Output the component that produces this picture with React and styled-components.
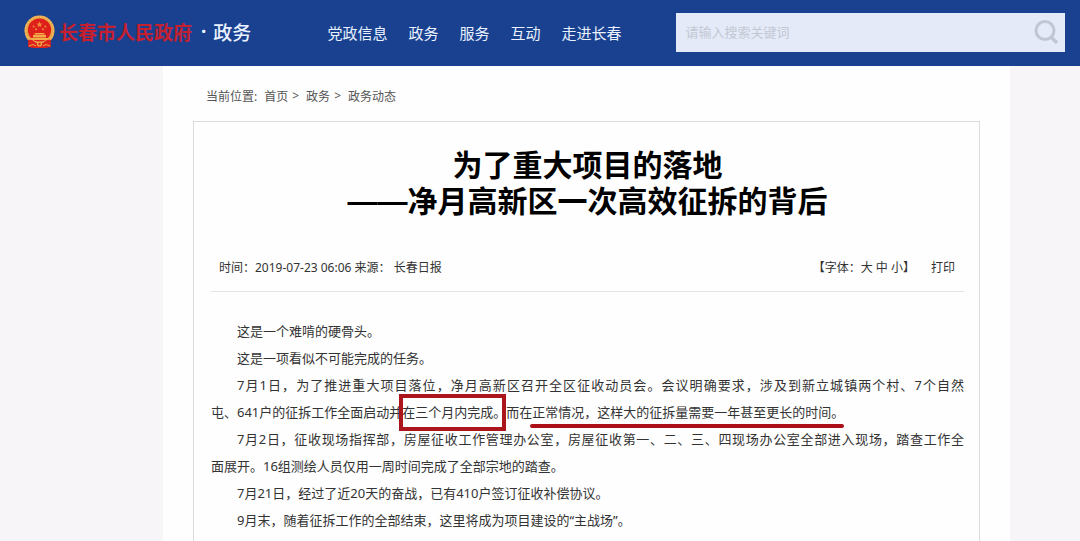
import React, { useState } from 'react'
import styled, { createGlobalStyle } from 'styled-components'

const navLinks = ['党政信息', '政务', '服务', '互动', '走进长春']

function Emblem() {
  return (
    <svg width="31" height="34" viewBox="0 0 31 34" aria-hidden="true">
      <path d="M5 23 L4 32 L10 33 L21 33 L27 32 L26 23 Z" fill="#d8231f" />
      <circle cx="15.5" cy="15.5" r="15" fill="#e9a545" />
      <circle cx="15.5" cy="15.5" r="14" fill="none" stroke="#f0bc68" strokeWidth="1.4" strokeDasharray="2 1" />
      <circle cx="15.5" cy="15" r="11.6" fill="#df1f1c" />
      <path d="M15.5 6.5l.8 2.1 2.3.1-1.8 1.4.6 2.2-1.9-1.2-1.9 1.2.6-2.2-1.8-1.4 2.3-.1z" fill="#f08b3a" />
      <circle cx="9.6" cy="11.6" r="1" fill="#f08b3a" />
      <circle cx="12" cy="14.2" r="1" fill="#f08b3a" />
      <circle cx="19" cy="14.2" r="1" fill="#f08b3a" />
      <circle cx="21.4" cy="11.6" r="1" fill="#f08b3a" />
      <path d="M11 18h9l1 1.5h-11zM9 20h13v2.5h-13zM6.5 23h18v2h-18z" fill="#f2ad48" />
      <path d="M4 25c4-1 6 1 8 3h7c2-2 4-4 8-3l-1 7c-3 0-4 0-6 1h-9c-2-1-3-1-6-1z" fill="#dd231e" />
      <circle cx="15.5" cy="29" r="2.6" fill="#f0a944" />
      <circle cx="15.5" cy="29" r="1.2" fill="#d8231f" />
      <path d="M5 31l4-1.5 3 1.5M26 31l-4-1.5-3 1.5" fill="none" stroke="#eea544" strokeWidth="1" />
    </svg>
  )
}

function SearchBox() {
  const [word, setWord] = useState('')

  return (
    <SearchForm role="search" onSubmit={(e) => e.preventDefault()}>
      <SearchInput
        type="text"
        aria-label="搜索"
        placeholder="请输入搜索关键词"
        value={word}
        onChange={(e) => setWord(e.target.value)}
      />
      <SearchButton type="submit" aria-label="搜索">
        <svg width="26" height="26" viewBox="0 0 26 26" fill="none" stroke="#c2c6d4" aria-hidden="true">
          <circle cx="12" cy="11.5" r="9" strokeWidth="3" />
          <path d="M18 18 L24 24" strokeWidth="3.5" />
        </svg>
      </SearchButton>
    </SearchForm>
  )
}

function App() {
  return (
    <Page lang="zh-CN">
      <GlobalStyle />
      <Header>
        <Brand href="#">
          <Emblem />
          <BrandName>长春市人民政府</BrandName>
          <Channel>
            <b>·</b>
            <span>政务</span>
          </Channel>
        </Brand>
        <Nav>
          {navLinks.map((item) => (
            <a key={item} href="#">{item}</a>
          ))}
        </Nav>
        <SearchBox />
      </Header>

      <Main>
        <Breadcrumb aria-label="当前位置">
          <span>当前位置:</span>
          <a href="#">首页</a>
          <i>&gt;</i>
          <a href="#">政务</a>
          <i>&gt;</i>
          <a href="#">政务动态</a>
        </Breadcrumb>

        <Article>
          <Title>
            为了重大项目的落地
            <br />
            ——净月高新区一次高效征拆的背后
          </Title>

          <Meta>
            <span>时间：2019-07-23 06:06 来源： 长春日报</span>
            <Tools>
              <span>
                【字体：<button type="button">大</button> <button type="button">中</button>{' '}
                <button type="button">小</button>】
              </span>
              <button type="button">打印</button>
            </Tools>
          </Meta>

          <Content>
            <p>这是一个难啃的硬骨头。</p>
            <p>这是一项看似不可能完成的任务。</p>
            <p>
              <FullLine>7月1日，为了推进重大项目落位，净月高新区召开全区征收动员会。会议明确要求，涉及到新立城镇两个村、7个自然</FullLine>
              屯、641户的征拆工作全面启动并<Boxed>在三个月内完成。</Boxed>而在<Underlined>正常情况，这样大的征拆量需要一年甚至更长的时间。</Underlined>
            </p>
            <p>
              <FullLine>7月2日，征收现场指挥部，房屋征收工作管理办公室，房屋征收第一、二、三、四现场办公室全部进入现场，踏查工作全</FullLine>
              面展开。16组测绘人员仅用一周时间完成了全部宗地的踏查。
            </p>
            <p>7月21日，经过了近20天的奋战，已有410户签订征收补偿协议。</p>
            <p>9月末，随着征拆工作的全部结束，这里将成为项目建设的“主战场”。</p>
          </Content>
        </Article>
      </Main>
    </Page>
  )
}

export default App

const GlobalStyle = createGlobalStyle`
  * {
    box-sizing: border-box;
  }
  body {
    margin: 0;
    background: #f7f5f7;
    color: #333;
    font-family: "Noto Sans", "Noto Sans CJK SC", sans-serif;
    font-size: 12px;
  }
  a {
    color: inherit;
    text-decoration: none;
  }
  button {
    padding: 0;
    border: 0;
    background: none;
    color: inherit;
    font: inherit;
    cursor: pointer;
  }
`

const Page = styled.div`
  display: flex;
  flex-direction: column;
  min-height: 100vh;
`

const Header = styled.header`
  display: flex;
  align-items: center;
  height: 66px;
  padding: 0 15px 2px 24px;
  background: #19418f;
  color: #eaf1ff;
`

const Brand = styled.a`
  display: flex;
  align-items: center;
  white-space: nowrap;
`

const BrandName = styled.span`
  margin-left: 4px;
  color: #c4202f;
  font-size: 19px;
  font-weight: bold;
`

const Channel = styled.span`
  display: flex;
  gap: 7px;
  margin-left: 9px;
  font-size: 19px;
  font-weight: 500;
`

const Nav = styled.nav`
  display: flex;
  gap: 21px;
  margin-left: 76px;
  font-size: 15px;
  white-space: nowrap;
`

const SearchForm = styled.form`
  display: flex;
  flex: 1;
  align-items: center;
  height: 39px;
  margin-left: 55px;
  padding: 0 6px 0 9px;
  background: #e4eaf8;
`

const SearchInput = styled.input`
  flex: 1;
  min-width: 0;
  height: 100%;
  padding: 0;
  border: 0;
  outline: 0;
  background: transparent;
  color: #333;
  font-family: inherit;
  font-size: 13px;

  &::placeholder {
    color: #c3c8d3;
  }
`

const SearchButton = styled.button`
  display: flex;
`

const Main = styled.main`
  display: flex;
  flex: 1;
  flex-direction: column;
  margin: 0 70px 0 163px;
  padding: 0 30px;
  background: #fefefe;
`

const Breadcrumb = styled.nav`
  display: flex;
  align-items: center;
  height: 55px;
  padding: 4px 13px 0;
  color: #555;

  a {
    margin-left: 7px;
  }
  i {
    margin-left: 4px;
    font-style: normal;
  }
`

const Article = styled.article`
  flex: 1;
  padding: 26px 15px 0 17px;
  border: 1px solid #dddbe0;
  border-bottom: 0;
`

const Title = styled.h1`
  margin: 0;
  color: #000;
  font-family: "Liberation Sans", "Noto Sans CJK SC", sans-serif;
  font-size: 30px;
  line-height: 36px;
  text-align: center;
`

const Meta = styled.div`
  display: flex;
  align-items: center;
  justify-content: space-between;
  height: 50px;
  margin-top: 22px;
  padding: 0 9px 0 8px;
  border-bottom: 1px solid #e4e4e6;
`

const Tools = styled.div`
  display: flex;
  gap: 16px;
`

const Content = styled.div`
  padding-top: 26px;
  font-size: 13px;
  line-height: 27px;

  p {
    margin: 0;
    text-indent: 2em;
  }
`

//Linea completa, justificada de borde a borde
const FullLine = styled.span`
  display: block;
  text-align: justify;
  text-align-last: justify;
`

const Mark = styled.span`
  position: relative;
  display: inline-block;
  text-indent: 0;
  white-space: nowrap;
`

const Boxed = styled(Mark)`
  &::after {
    content: '';
    position: absolute;
    inset: -5px 0 -5px -3px;
    border: 4px solid #ab161c;
  }
`

const Underlined = styled(Mark)`
  &::after {
    content: '';
    position: absolute;
    right: 0;
    bottom: -2px;
    left: -2px;
    height: 4px;
    border-radius: 2px;
    background: #ab0f18;
  }
`
